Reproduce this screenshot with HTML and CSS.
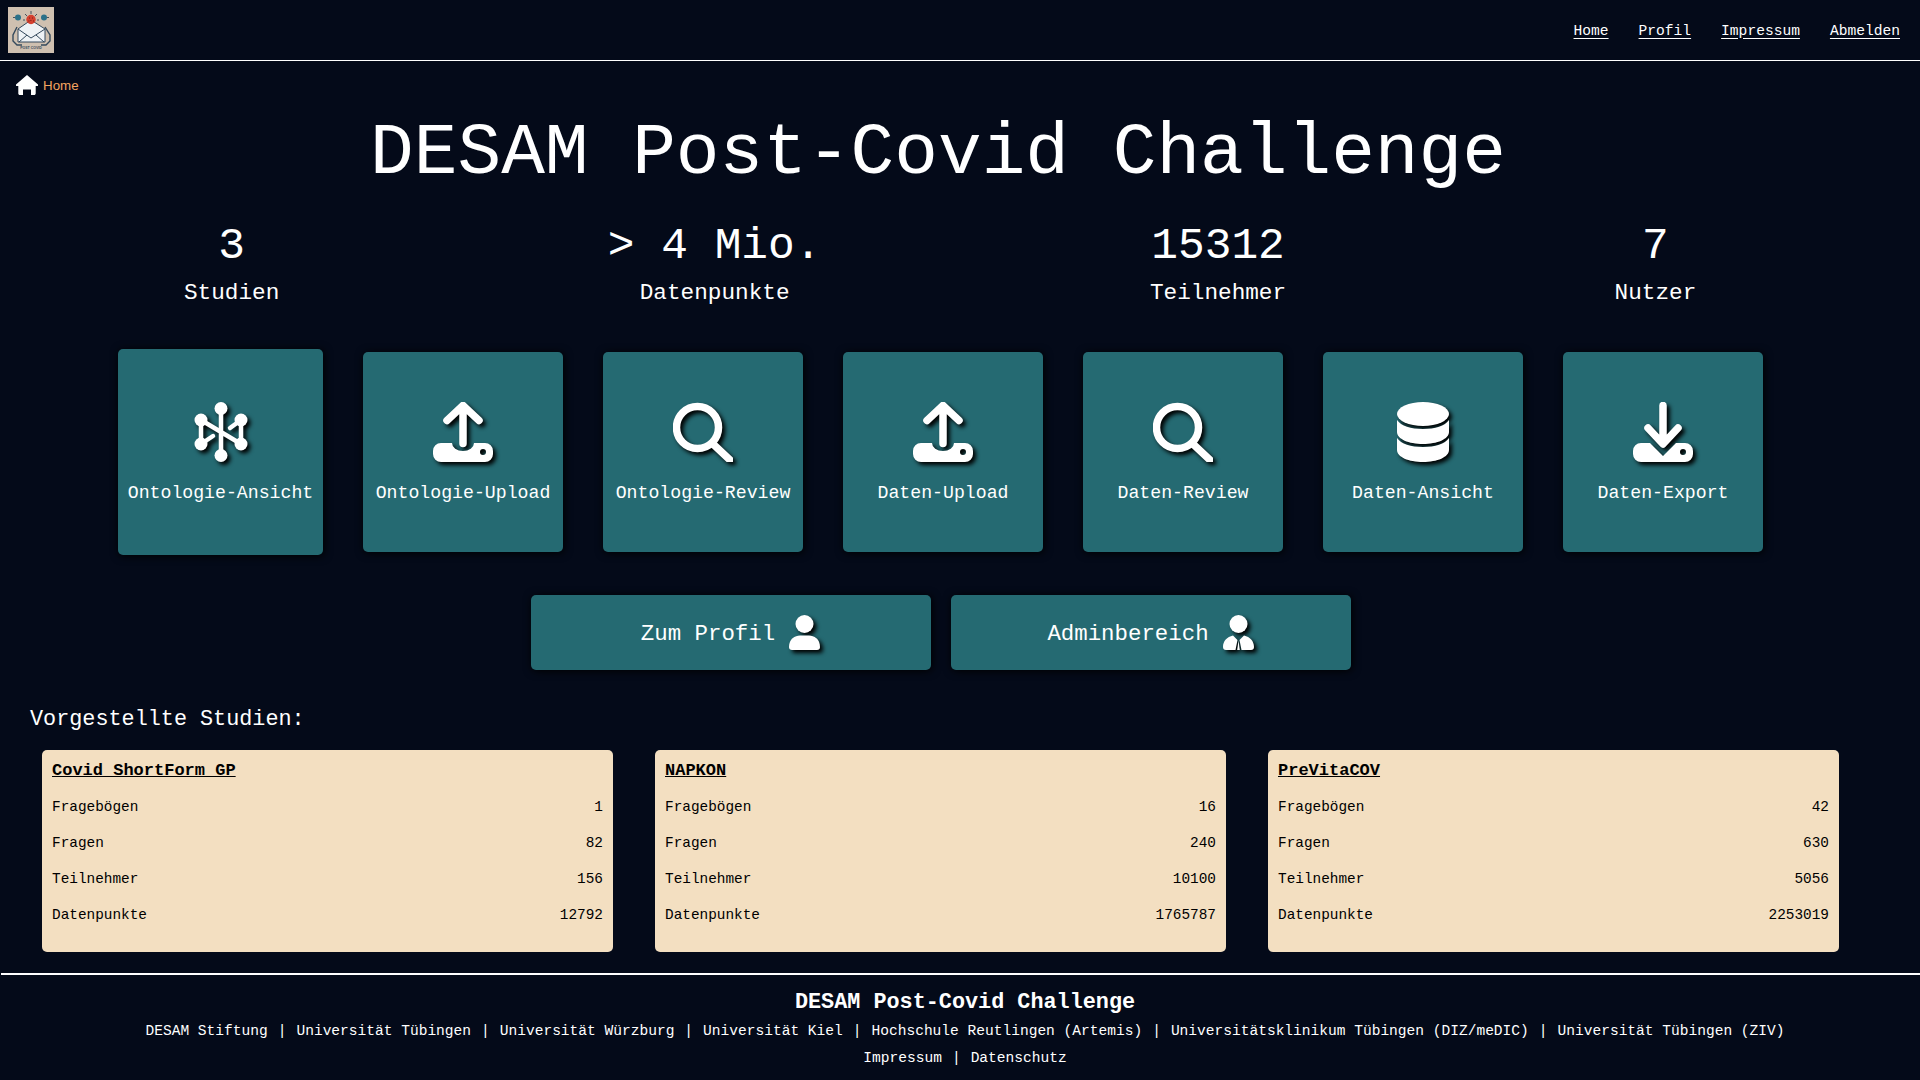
FILE: index.html
```html
<!DOCTYPE html>
<html lang="de">
<head>
    <meta charset="UTF-8">
    <meta name="viewport" content="width=device-width, initial-scale=1.0">
    <title>DESAM Post-Covid Challenge</title>
    <link rel="stylesheet" href="styles.css">
</head>
<body>
    <svg class="sprite" width="0" height="0">
        <symbol id="i-upload" viewBox="0 0 60 60">
            <path class="line" d="M30 4v37.5M14 18.500 30 3.500l16 15"/>
            <path fill-rule="evenodd" d="M8 41h11a11 8 0 0 0 22 0h11a8 8 0 0 1 8 8v3a8 8 0 0 1-8 8H8a8 8 0 0 1-8-8v-3a8 8 0 0 1 8-8zM50 47a3 3 0 1 0 0 6 3 3 0 0 0 0-6z"/>
        </symbol>
        <symbol id="i-download" viewBox="0 0 60 60">
            <path class="line" d="M30 3.500V41M15 26l15 16 15-16"/>
            <path fill-rule="evenodd" d="M8 41h9l13 13 13-13h9a8 8 0 0 1 8 8v3a8 8 0 0 1-8 8H8a8 8 0 0 1-8-8v-3a8 8 0 0 1 8-8zM50 47a3 3 0 1 0 0 6 3 3 0 0 0 0-6z"/>
        </symbol>
        <symbol id="i-search" viewBox="0 0 60 60">
            <circle class="line" cx="24.500" cy="25.500" r="21"/>
            <path class="line" d="M40 42l17 16"/>
        </symbol>
        <symbol id="i-database" viewBox="0 0 60 60">
            <ellipse cx="30" cy="12" rx="26" ry="12"/>
            <path d="M4 18c4 6 14 9 26 9s22-3 26-9v12c0 7-11.600 12-26 12S4 37 4 30z"/>
            <path d="M4 36c4 6 14 9 26 9s22-3 26-9v12c0 7-11.600 12-26 12S4 55 4 48z"/>
        </symbol>
        <symbol id="i-network" viewBox="0 0 60 60">
            <path class="line thin" d="M30 6v48M10 18l40 24M10 18v24M50 18v24M10 42l12-8M50 18l-11 8"/>
            <circle cx="30" cy="6.500" r="6.500"/>
            <circle cx="10" cy="18" r="6.500"/>
            <circle cx="50" cy="18" r="6.500"/>
            <circle cx="10" cy="42" r="6.500"/>
            <circle cx="50" cy="42" r="6.500"/>
            <circle cx="30" cy="53.500" r="6.500"/>
        </symbol>
        <symbol id="i-user" viewBox="0 0 31 35">
            <ellipse cx="15.500" cy="9" rx="9" ry="9"/>
            <path d="M3 35h25a3 3 0 0 0 3-3c0-8-6-11.500-11-11.500h-9C6 20.500 0 24 0 32a3 3 0 0 0 3 3z"/>
        </symbol>
        <symbol id="i-admin" viewBox="0 0 31 35">
            <ellipse cx="15.500" cy="9" rx="9" ry="9"/>
            <path fill-rule="evenodd" d="M3 35h25a3 3 0 0 0 3-3c0-6-4-10-10-11.500L16.500 25l2 10h-6l2-10L10 20.500C4 22 0 26 0 32a3 3 0 0 0 3 3z"/>
            <path d="M15.500 25.500l-1.300 9.500h2.600z"/>
        </symbol>
    </svg>

    <header class="topbar">
        <svg class="logo" viewBox="0 0 46 46">
            <rect width="46" height="46" fill="#cfc0b0"/>
            <circle cx="10" cy="10.500" r="3" fill="#2a7089"/>
            <circle cx="36" cy="10.500" r="3" fill="#2a7089"/>
            <path d="M23 4v3M17 7l2 2M29 7l-2 2M15 13h2M31 13h-2M7 10.500H5M39 10.500h2" stroke="#46505c" stroke-width="1"/>
            <path d="M10 22l13-9 14 9v13H10z" fill="#eef2f5" stroke="#34495c"/>
            <path d="M10 22l13 9 14-9M11 35l8-7M36 35l-8-7" fill="none" stroke="#34495c"/>
            <circle cx="23" cy="12.500" r="4.700" fill="#d5402f"/>
            <path d="M21 11h.8M24 11h.8M22.500 13.500h.8M20.500 14h.8M25 14h.8" stroke="#5c1a15"/>
            <path d="M9 20l-4 8v6l4 4h5M37 20l5 8v6l-4 4h-5" fill="none" stroke="#34495c" stroke-width="1.400"/>
            <text class="logo-text" x="23" y="42" text-anchor="middle">POST COVID</text>
        </svg>
        <nav class="topnav">
            <a href="#">Home</a>
            <a href="#">Profil</a>
            <a href="#">Impressum</a>
            <a href="#">Abmelden</a>
        </nav>
    </header>

    <div class="breadcrumb">
        <svg class="home-icon" viewBox="0 0 22 20"><path d="M11 0 22 9.500c.6.600.2 1.500-.6 1.500h-1.700v7.500c0 .8-.7 1.500-1.500 1.500h-3.200v-5.500H7V20H3.800c-.8 0-1.500-.7-1.500-1.500V11H.6C-.2 11-.6 10.100 0 9.500z"/></svg>
        <a href="#">Home</a>
    </div>

    <main class="content">
        <h1 class="page-title">DESAM Post-Covid Challenge</h1>

        <section class="stats">
            <div class="stat"><div class="stat-value">3</div><div class="stat-label">Studien</div></div>
            <div class="stat"><div class="stat-value">&gt; 4 Mio.</div><div class="stat-label">Datenpunkte</div></div>
            <div class="stat"><div class="stat-value">15312</div><div class="stat-label">Teilnehmer</div></div>
            <div class="stat"><div class="stat-value">7</div><div class="stat-label">Nutzer</div></div>
        </section>

        <section class="tiles">
            <a class="tile tile-first" href="#"><svg class="tile-icon"><use href="#i-network"/></svg><span>Ontologie-Ansicht</span></a>
            <a class="tile" href="#"><svg class="tile-icon"><use href="#i-upload"/></svg><span>Ontologie-Upload</span></a>
            <a class="tile" href="#"><svg class="tile-icon"><use href="#i-search"/></svg><span>Ontologie-Review</span></a>
            <a class="tile" href="#"><svg class="tile-icon"><use href="#i-upload"/></svg><span>Daten-Upload</span></a>
            <a class="tile" href="#"><svg class="tile-icon"><use href="#i-search"/></svg><span>Daten-Review</span></a>
            <a class="tile" href="#"><svg class="tile-icon"><use href="#i-database"/></svg><span>Daten-Ansicht</span></a>
            <a class="tile" href="#"><svg class="tile-icon"><use href="#i-download"/></svg><span>Daten-Export</span></a>
        </section>

        <section class="actions">
            <a class="action" href="#"><span>Zum Profil</span><svg class="action-icon"><use href="#i-user"/></svg></a>
            <a class="action" href="#"><span>Adminbereich</span><svg class="action-icon"><use href="#i-admin"/></svg></a>
        </section>
    </main>

    <h2 class="studies-title">Vorgestellte Studien:</h2>
    <section class="studies">
        <article class="study">
            <a class="study-name" href="#">Covid_ShortForm_GP</a>
            <div class="study-row"><span>Fragebögen</span><span>1</span></div>
            <div class="study-row"><span>Fragen</span><span>82</span></div>
            <div class="study-row"><span>Teilnehmer</span><span>156</span></div>
            <div class="study-row"><span>Datenpunkte</span><span>12792</span></div>
        </article>
        <article class="study">
            <a class="study-name" href="#">NAPKON</a>
            <div class="study-row"><span>Fragebögen</span><span>16</span></div>
            <div class="study-row"><span>Fragen</span><span>240</span></div>
            <div class="study-row"><span>Teilnehmer</span><span>10100</span></div>
            <div class="study-row"><span>Datenpunkte</span><span>1765787</span></div>
        </article>
        <article class="study">
            <a class="study-name" href="#">PreVitaCOV</a>
            <div class="study-row"><span>Fragebögen</span><span>42</span></div>
            <div class="study-row"><span>Fragen</span><span>630</span></div>
            <div class="study-row"><span>Teilnehmer</span><span>5056</span></div>
            <div class="study-row"><span>Datenpunkte</span><span>2253019</span></div>
        </article>
    </section>

    <footer class="footer">
        <div class="footer-title">DESAM Post-Covid Challenge</div>
        <div class="footer-links">
            <a href="#">DESAM Stiftung</a><span class="sep">|</span><a href="#">Universität Tübingen</a><span class="sep">|</span><a href="#">Universität Würzburg</a><span class="sep">|</span><a href="#">Universität Kiel</a><span class="sep">|</span><a href="#">Hochschule Reutlingen (Artemis)</a><span class="sep">|</span><a href="#">Universitätsklinikum Tübingen (DIZ/meDIC)</a><span class="sep">|</span><a href="#">Universität Tübingen (ZIV)</a>
        </div>
        <div class="footer-links">
            <a href="#">Impressum</a><span class="sep">|</span><a href="#">Datenschutz</a>
        </div>
    </footer>
</body>
</html>
```

FILE: styles.css
```css
* {
    box-sizing: border-box;
}

body {
    margin: 0;
    height: 1080px;
    overflow: hidden;
    background: #040a19;
    color: #fff;
    font-family: "Liberation Mono", monospace;
}

a {
    color: inherit;
}

.sprite {
    position: absolute;
}

.line {
    fill: none;
    stroke: #fff;
    stroke-width: 7.5;
    stroke-linecap: round;
    stroke-linejoin: round;
}

.line.thin {
    stroke-width: 4.5;
}

/* top bar */
.topbar {
    height: 61px;
    display: flex;
    align-items: center;
    justify-content: space-between;
    padding: 0 20px 0 8px;
    border-bottom: 1px solid #fff;
}

.logo {
    width: 46px;
    height: 46px;
}

.logo-text {
    font-family: "Liberation Sans", sans-serif;
    font-size: 3.5px;
    font-weight: 700;
    fill: #34495c;
}

.topnav {
    display: flex;
    gap: 30px;
    padding-top: 1px;
    font-size: 14.6px;
}

.topnav a {
    text-underline-offset: 3px;
}

/* breadcrumb */
.breadcrumb {
    height: 36px;
    margin-top: 6px;
    display: flex;
    align-items: center;
    gap: 5px;
    padding-left: 16px;
    font-family: "Liberation Sans", sans-serif;
    font-size: 13.33px;
    color: #f4a460;
}

.breadcrumb a {
    text-decoration: none;
}

.home-icon {
    width: 22px;
    height: 20px;
    fill: #fff;
}

/* main block is centred a bit left of the page */
.content {
    padding-right: 39px;
}

.page-title {
    margin: 0;
    padding: 5px 5px 0 0;
    height: 103px;
    font-size: 72.8px;
    font-weight: 400;
    line-height: 92px;
    text-align: center;
}

.stats {
    display: flex;
    gap: 328.5px;
    padding: 15px 0 0 184px;
    text-align: center;
}

.stat-value {
    font-size: 44.5px;
    line-height: 50px;
}

.stat-label {
    font-size: 22.7px;
    line-height: 30px;
    margin-top: 7px;
}

/* tiles */
.tiles {
    display: flex;
    align-items: center;
    gap: 40px;
    padding-left: 118px;
    margin-top: 41px;
}

.tile {
    width: 200px;
    height: 200px;
    flex: none;
    display: flex;
    flex-direction: column;
    align-items: center;
    justify-content: center;
    background: #256a72;
    border-radius: 5px;
    box-shadow: 1px 1px 8px #000;
    font-size: 18.2px;
    line-height: 18px;
    text-decoration: none;
}

.tile span {
    margin-bottom: 1px;
}

.tile-first {
    width: 205px;
    height: 206px;
}

.tile-icon {
    width: 60px;
    height: 60px;
    margin-bottom: 22px;
    fill: #fff;
    filter: drop-shadow(3px 3px 2px #000);
}

/* action buttons */
.actions {
    display: flex;
    justify-content: center;
    gap: 20px;
    margin-top: 40px;
}

.action {
    width: 400px;
    height: 75px;
    display: flex;
    align-items: center;
    justify-content: center;
    gap: 14px;
    background: #256a72;
    border-radius: 5px;
    box-shadow: 1px 1px 8px #000;
    font-size: 22.4px;
    text-decoration: none;
}

.action span {
    padding-top: 2px;
}

.action-icon {
    width: 31px;
    height: 35px;
    fill: #fff;
    filter: drop-shadow(3px 3px 2px #000);
}

/* studies */
.studies-title {
    margin: 36px 0 0;
    padding-left: 30px;
    font-size: 21.8px;
    font-weight: 400;
    line-height: 28px;
}

.studies {
    display: flex;
    gap: 42px;
    padding-left: 42px;
    margin-top: 16px;
}

.study {
    width: 571px;
    height: 202px;
    padding: 11px 10px 0;
    background: #f3dfc1;
    border-radius: 5px;
    color: #000;
    font-size: 14.4px;
}

.study-name {
    display: block;
    font-size: 17px;
    font-weight: 700;
    line-height: 20px;
    margin-bottom: 8px;
}

.study-row {
    display: flex;
    justify-content: space-between;
    height: 36px;
    align-items: center;
}

/* footer */
.footer {
    margin-top: 21px;
    padding: 15px 0 0 9px;
    border-top: 2px solid #fff;
    margin-left: 1px;
    text-align: center;
    font-size: 14.56px;
}

.footer-title {
    font-size: 21.8px;
    font-weight: 700;
    line-height: 26px;
    margin-bottom: 2px;
}

.footer-links {
    line-height: 27px;
}

.footer-links a {
    text-decoration: none;
}

.sep {
    padding: 0 10px;
}
```
